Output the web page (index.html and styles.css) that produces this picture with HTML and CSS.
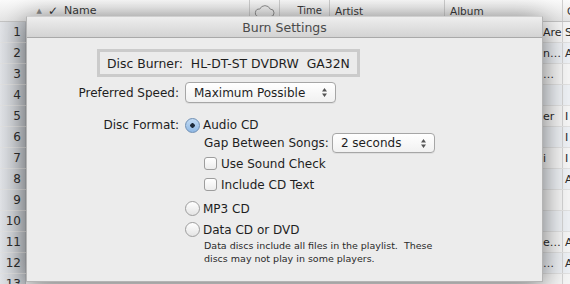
FILE: index.html
```html
<!DOCTYPE html>
<html>
<head>
<meta charset="utf-8">
<link rel="stylesheet" href="styles.css">
</head>
<body>
<div class="window">
  <div class="table">
    <div class="thead">
      <div class="th th-num"></div>
      <div class="th th-sort"><span class="sort-arrow">▲</span><span class="check">✓</span></div>
      <div class="th th-name">Name</div>
      <div class="th th-cloud">
        <svg width="22" height="14" viewBox="0 0 22 14"><path d="M5 13 H17 A4 4 0 0 0 17 5 A6 6 0 0 0 6 5 A4 4 0 0 0 5 13 Z" fill="none" stroke="#8a8a8a" stroke-width="1"/></svg>
      </div>
      <div class="th th-time">Time</div>
      <div class="th th-artist">Artist</div>
      <div class="th th-album">Album</div>
      <div class="th th-last">G</div>
    </div>
    <div class="row"><div class="num">1</div><div class="album">Are</div><div class="last">S</div></div>
    <div class="row alt"><div class="num">2</div><div class="album">n…</div><div class="last">A</div></div>
    <div class="row"><div class="num">3</div><div class="album">…</div><div class="last"></div></div>
    <div class="row alt"><div class="num">4</div><div class="album"></div><div class="last"></div></div>
    <div class="row"><div class="num">5</div><div class="album">er</div><div class="last">I</div></div>
    <div class="row alt"><div class="num">6</div><div class="album"></div><div class="last">I</div></div>
    <div class="row"><div class="num">7</div><div class="album">i</div><div class="last">I</div></div>
    <div class="row alt"><div class="num">8</div><div class="album"></div><div class="last">A</div></div>
    <div class="row"><div class="num">9</div><div class="album"></div><div class="last"></div></div>
    <div class="row alt"><div class="num">10</div><div class="album"></div><div class="last"></div></div>
    <div class="row"><div class="num">11</div><div class="album">e…</div><div class="last">A</div></div>
    <div class="row alt"><div class="num">12</div><div class="album">…</div><div class="last">A</div></div>
    <div class="row"><div class="num">13</div><div class="album"></div><div class="last"></div></div>
  </div>

  <div class="sheet">
    <div class="titlebar">Burn Settings</div>
    <div class="sheet-body">
      <div class="burner">Disc Burner:&nbsp; HL-DT-ST DVDRW&nbsp; GA32N</div>

      <div class="form-row speed-row">
        <div class="label">Preferred Speed:</div>
        <div class="popup popup-speed">
          <span>Maximum Possible</span>
          <svg class="updown" width="7" height="11" viewBox="0 0 7 11"><path d="M3.5 1 L6 4.5 H1 Z M3.5 10 L6 6.5 H1 Z" fill="#555"/></svg>
        </div>
      </div>

      <div class="form-row format-row">
        <div class="label">Disc Format:</div>
        <div class="option"><span class="radio on"></span><span>Audio CD</span></div>
      </div>

      <div class="sub gap-row">
        <span>Gap Between Songs:</span>
        <div class="popup popup-gap">
          <span>2 seconds</span>
          <svg class="updown" width="7" height="11" viewBox="0 0 7 11"><path d="M3.5 1 L6 4.5 H1 Z M3.5 10 L6 6.5 H1 Z" fill="#555"/></svg>
        </div>
      </div>
      <div class="sub check-row"><span class="checkbox"></span><span>Use Sound Check</span></div>
      <div class="sub check-row"><span class="checkbox"></span><span>Include CD Text</span></div>

      <div class="opt-row mp3-row"><span class="radio"></span><span>MP3 CD</span></div>
      <div class="opt-row data-row"><span class="radio"></span><span>Data CD or DVD</span></div>
      <div class="note">Data discs include all files in the playlist.&nbsp; These<br>discs may not play in some players.</div>
    </div>
  </div>
</div>
</body>
</html>
```

FILE: styles.css
```css
* { box-sizing: border-box; }
html, body { margin: 0; padding: 0; }
body {
  width: 570px;
  height: 284px;
  overflow: hidden;
  font-family: "DejaVu Sans", "Liberation Sans", sans-serif;
  background: #ffffff;
}
.window {
  position: relative;
  width: 570px;
  height: 284px;
  overflow: hidden;
}

/* background table */
.table {
  display: flex;
  flex-direction: column;
  font-size: 11px;
  color: #2a2a2a;
}
.thead {
  display: grid;
  grid-template-columns: 26px 34px 190px 30px 50px 115px 118px 1fr;
  height: 22px;
  background: linear-gradient(#fbfbfb, #e6e6e6);
  border-bottom: 1px solid #c4c4c4;
}
.th {
  display: flex;
  align-items: center;
  padding: 0 4px;
  border-right: 1px solid #cfcfcf;
  color: #3a3a3a;
  font-size: 10.5px;
}
.th-num { border-right: none; }
.th-sort { gap: 6px; justify-content: flex-end; border-right: none; padding-right: 2px; }
.sort-arrow { font-size: 7px; color: #8c8c8c; }
.check { font-weight: bold; font-size: 12px; color: #333; }
.th-name { padding-left: 4px; font-size: 11px; }
.th-cloud { justify-content: center; }
.th-time { justify-content: flex-end; padding-right: 7px; font-size: 10px; }
.th-artist { padding-left: 5px; font-size: 10.5px; }
.th-album { padding-left: 5px; font-size: 10.5px; }
.th-last { border-right: none; }

.row {
  display: grid;
  grid-template-columns: 26px 517px 20px 1fr;
  height: 21px;
  background: #f6f6f6;
  border-bottom: 1px solid #e2e2e2;
  align-items: center;
}
.row.alt { background: #eef1f5; }
.num {
  height: 100%;
  display: flex;
  align-items: center;
  justify-content: flex-end;
  padding-right: 4px;
  font-size: 12px;
  color: #2e2e2e;
  background: linear-gradient(90deg, #e2e4e8, #c7cbd0);
  border-right: 1px solid #b9bcc1;
}
.row .album {
  grid-column: 3;
  height: 100%;
  display: flex;
  align-items: center;
  justify-content: flex-start;
  overflow: hidden;
  white-space: nowrap;
  border-right: 1px solid #d4d4d4;
}
.row .last { grid-column: 4; padding-left: 2px; }

/* sheet */
.sheet {
  position: absolute;
  left: 26px;
  top: 16px;
  width: 517px;
  height: 266px;
  background: #ececec;
  border: 1px solid #b4b4b4;
  border-top-color: #d0d0d0;
  box-shadow: 0 4px 26px rgba(0, 0, 0, 0.55);
  font-size: 12px;
  color: #1e1e1e;
}
.titlebar {
  height: 21px;
  display: flex;
  align-items: center;
  justify-content: center;
  background: linear-gradient(#eeeeee, #d3d3d3);
  border-bottom: 1px solid #a9a9a9;
  color: #4a4a4a;
  font-size: 12.5px;
}
.sheet-body {
  display: flex;
  flex-direction: column;
}
.burner {
  margin: 11px 0 0 70px;
  width: 263px;
  height: 28px;
  border: 3px solid #cbcbcb;
  background: #ebebeb;
  display: flex;
  align-items: center;
  padding-left: 7px;
  white-space: nowrap;
  font-size: 12.4px;
}
.form-row {
  display: flex;
  align-items: center;
}
.label {
  width: 158px;
  text-align: right;
  padding-right: 6px;
  white-space: nowrap;
}
.speed-row { margin-top: 5px; height: 21px; }
.popup {
  display: flex;
  align-items: center;
  justify-content: space-between;
  height: 21px;
  background: linear-gradient(#ffffff, #f1f1f1);
  border: 1px solid #a6a6a6;
  border-radius: 4px;
  box-shadow: 0 1px 0 rgba(0,0,0,0.06);
  padding: 0 7px 0 8px;
  white-space: nowrap;
}
.popup-speed { width: 151px; }
.popup-gap { width: 103px; height: 20px; margin-left: 3px; }
.updown { flex: none; }

.format-row { margin-top: 13px; height: 18px; }
.option { display: flex; align-items: center; gap: 3px; }

.radio {
  width: 15px;
  height: 15px;
  border-radius: 50%;
  border: 1px solid #9d9d9d;
  background: linear-gradient(#ffffff, #e4e4e4);
  flex: none;
}
.radio.on {
  background: radial-gradient(circle at 50% 50%, #1d2a3a 0 2px, transparent 2.5px), linear-gradient(#c3dbf3, #8fb8e4);
  border-color: #6f8fb4;
}
.checkbox {
  width: 13px;
  height: 13px;
  border-radius: 3px;
  border: 1px solid #9d9d9d;
  background: linear-gradient(#ffffff, #ececec);
  flex: none;
}

.sub {
  display: flex;
  align-items: center;
  margin-left: 177px;
  white-space: nowrap;
}
.gap-row { height: 20px; margin-top: -1px; }
.check-row { height: 21px; gap: 4px; }

.opt-row {
  display: flex;
  align-items: center;
  gap: 3px;
  margin-left: 158px;
}
.mp3-row { height: 21px; margin-top: 3px; }
.data-row { height: 21px; }
.note {
  margin-left: 177px;
  margin-top: -1px;
  font-size: 9.5px;
  line-height: 13px;
  color: #2a2a2a;
}
```
